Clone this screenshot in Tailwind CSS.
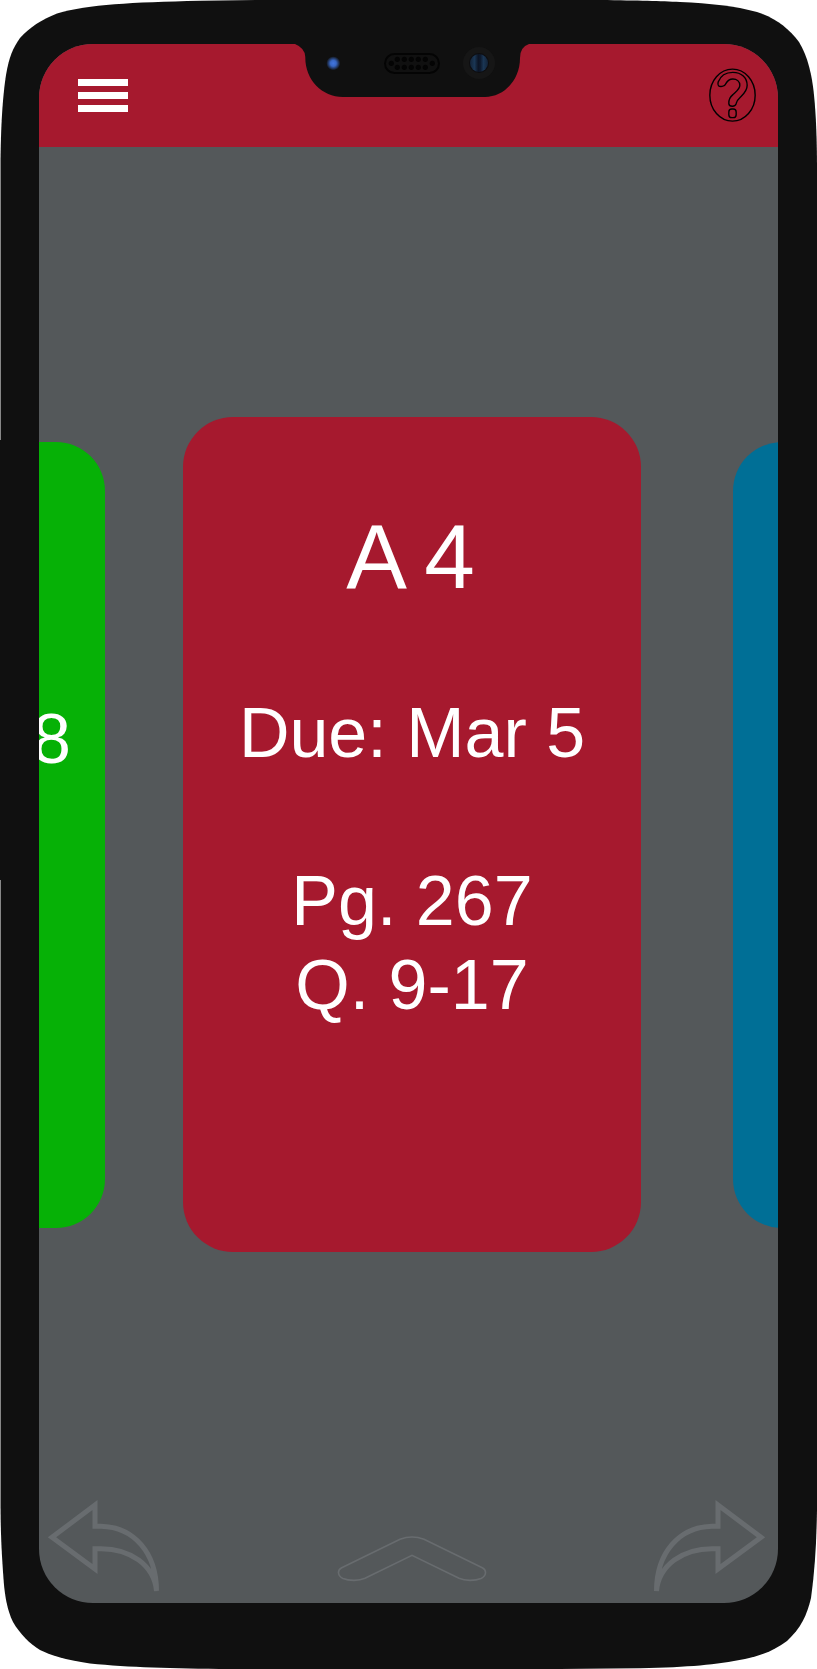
<!DOCTYPE html>
<html lang="en">
<head>
<meta charset="utf-8">
<title>Assignments</title>
<script src="https://cdn.jsdelivr.net/npm/@tailwindcss/browser@4"></script>
</head>
<body class="bg-white">
<div class="relative w-[817px] h-[1669px] overflow-hidden pt-[44px] pl-[39px] font-['Liberation_Sans',Arial,sans-serif] text-white">
  <!-- phone body -->
  <svg class="absolute inset-0" width="817" height="1669" viewBox="0 0 817 1669">
    <path fill="#101010" d="M0.5 160C1 120 3 95 6 75C9 57 13 48 20 38C30 27 41 20 57 13.500C90 4 130 2.500 200 0.700L260 0H600C640 0.500 660 1 680 2C710 3.500 735 6 757 12C777 19 788 28 799 42C808 57 812 75 814 95C816 115 817 140 817 170V1510C816.500 1540 815 1570 811 1598C807 1615 801 1628 787 1641C775 1650 763 1655 745 1659C715 1665 690 1667 640 1668.300L560 1669H230C170 1668.500 130 1667.500 90 1663.500C65 1660 50 1655 40 1650C30 1644 20 1634 13 1622C7 1610 5 1595 4 1585C2 1560 0.500 1535 0.500 1500Z"/>
    <path fill="#101010" d="M0 440H2V880H0Z"/>
  </svg>

  <main class="relative w-[739px] h-[1559px] rounded-[54px] overflow-hidden bg-[#54585a] flex flex-col">
    <header class="h-[103px] shrink-0 bg-[#a6192e] flex justify-between items-start pl-[39px] pr-[22px]">
      <button class="mt-[35px] flex flex-col gap-[6px]" aria-label="Menu">
        <span class="w-[50px] h-[7px] bg-white"></span>
        <span class="w-[50px] h-[7px] bg-white"></span>
        <span class="w-[50px] h-[7px] bg-white"></span>
      </button>
      <svg class="mt-[24px]" width="47" height="54" viewBox="127.500 205 141 162" fill="none" stroke="#000" stroke-width="4.200">
        <ellipse cx="198" cy="286.500" rx="68" ry="78"/>
        <path d="M155 247C163 226 178 218 199 218C225 218 242 234 242 257C242 276 228 286 220 294C210 303 210 305 209 312C207 322 188 323 187 312C186 300 190 292 200 284C212 273 220 268 220 257C220 245 211 238 199 238C188 238 183 243 178 252C174 262 160 262 156 258C153 255 154 251 155 247Z"/>
        <rect x="187" y="328" width="22" height="26" rx="9"/>
      </svg>
    </header>

    <section class="h-[1335px] shrink-0 flex items-start">
      <article class="mt-[295px] w-[66px] h-[786px] shrink-0 rounded-r-[49px] bg-[#06b106] overflow-hidden flex justify-end pr-[34px] pt-[255px]">
        <p class="text-[70px] leading-[84px] whitespace-nowrap">8</p>
      </article>
      <article class="mt-[270px] ml-[78px] w-[458px] h-[835px] shrink-0 rounded-[50px] bg-[#a6192e] pt-[90px] text-center">
        <h1 class="text-[91px] leading-[100px] [word-spacing:-3px] pr-[3px]">A 4</h1>
        <p class="mt-[84px] text-[70px] leading-[84px]">Due: Mar 5</p>
        <p class="mt-[84px] text-[70px] leading-[84px]">Pg. 267<br>Q. 9-17</p>
      </article>
      <article class="mt-[295px] ml-[92px] w-[45px] h-[786px] shrink-0 overflow-hidden">
        <div class="w-[300px] h-full rounded-l-[49px] bg-[#006f96]"></div>
      </article>
    </section>

    <footer class="flex items-start h-[121px] pt-[16px] pl-[7px] pr-[11px]">
      <svg class="shrink-0" width="116" height="95" viewBox="46 1498 116 95" fill="none" stroke="#686c6f" stroke-width="5">
        <path d="M52 1537.300L95 1505V1526.300H101C134 1527 156.500 1553 156.500 1591C154 1565 130 1548.700 101 1548.700H95V1569Z" stroke-miterlimit="3"/>
      </svg>
      <svg class="shrink-0 mt-[36px] ml-[175px]" width="150" height="48" viewBox="337 1534 150 48" fill="none" stroke="#686c6f" stroke-width="1.600">
        <path d="M341.700 1567.700L400 1539.300Q412 1534.600 424 1539.300L482.300 1567.700C487 1570 486.500 1576 481 1578.500C475 1581 465 1581 459 1578.300L412 1555.300L365 1578.300C359 1581 349 1581 343 1578.500C337.500 1576 337 1570 341.700 1567.700Z"/>
      </svg>
      <svg class="shrink-0 ml-[164px]" width="116" height="95" viewBox="46 1498 116 95" fill="none" stroke="#686c6f" stroke-width="5">
        <path transform="translate(208 0) scale(-1 1)" d="M52 1537.300L95 1505V1526.300H101C134 1527 156.500 1553 156.500 1591C154 1565 130 1548.700 101 1548.700H95V1569Z" stroke-miterlimit="3"/>
      </svg>
    </footer>
  </main>

  <!-- camera notch -->
  <svg class="absolute left-[290px] top-[40px]" width="245" height="60" viewBox="290 40 245 60">
    <defs>
      <radialGradient id="led"><stop offset="0" stop-color="#4276df"/><stop offset=".42" stop-color="#3867c4"/><stop offset="1" stop-color="#101010"/></radialGradient>
      <linearGradient id="lens"><stop offset="0" stop-color="#132338"/><stop offset=".25" stop-color="#1a3654"/><stop offset=".46" stop-color="#0c1424"/><stop offset=".58" stop-color="#0e1a2e"/><stop offset=".75" stop-color="#1a3654"/><stop offset="1" stop-color="#132338"/></linearGradient>
    </defs>
    <path fill="#101010" d="M290 40V44H295Q305 48 305.300 57C305 80 322 97 343 97H485C504 97 520 80 520 58Q520 47 529 44H535V40Z"/>
    <circle cx="333.300" cy="63.300" r="7" fill="url(#led)"/>
    <rect x="385" y="54" width="54" height="19" rx="9.500" fill="none" stroke="#040404" stroke-width="2"/>
    <g fill="#040404">
      <circle cx="397.300" cy="59.300" r="2.600"/><circle cx="404.300" cy="59.300" r="2.600"/><circle cx="411.300" cy="59.300" r="2.600"/><circle cx="418.300" cy="59.300" r="2.600"/><circle cx="425.300" cy="59.300" r="2.600"/>
      <circle cx="397.300" cy="67.300" r="2.600"/><circle cx="404.300" cy="67.300" r="2.600"/><circle cx="411.300" cy="67.300" r="2.600"/><circle cx="418.300" cy="67.300" r="2.600"/><circle cx="425.300" cy="67.300" r="2.600"/>
      <circle cx="391.300" cy="63.300" r="2.600"/><circle cx="432.300" cy="63.300" r="2.600"/>
    </g>
    <circle cx="479" cy="63" r="16" fill="#161616"/>
    <circle cx="479" cy="63" r="10" fill="#0d0d10"/>
    <circle cx="479" cy="63" r="9" fill="url(#lens)"/>
  </svg>
</div>
</body>
</html>
